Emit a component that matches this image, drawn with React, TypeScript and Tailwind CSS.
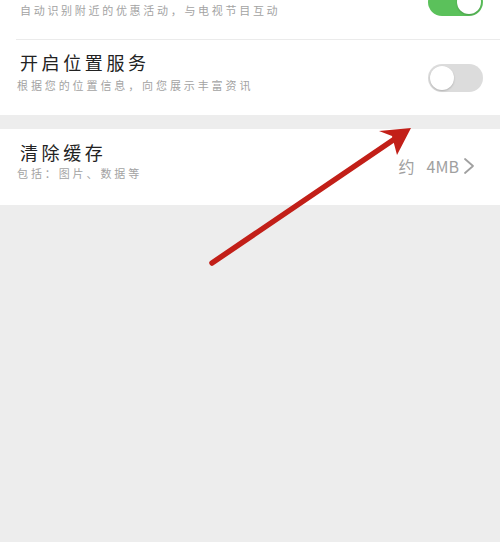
import React from "react"

const font = { fontFamily: '"Noto Sans CJK SC", "Noto Sans", sans-serif' }

function Toggle({ on }: { on: boolean }) {
  return (
    <div
      className={`flex h-[28px] w-[55px] shrink-0 items-center rounded-full p-[2px] ${
        on ? "justify-end bg-[#5bc15b]" : "justify-start bg-[#dcdcdc]"
      }`}
    >
      <div className="h-[24px] w-[24px] rounded-full bg-white shadow-[0_1px_2px_rgba(0,0,0,0.2)]" />
    </div>
  )
}

export default function App() {
  return (
    <div className="relative h-[542px] w-[500px] overflow-hidden bg-[#ededed]" style={font}>
      <div className="bg-white">
        <div className="-mt-[12px] ml-[16px] flex h-[52px] items-start justify-between border-b border-[#ebebeb] pr-[17px]">
          <div className="pt-[14px] pl-[4px] text-[11px] leading-[16px] tracking-[2.7px] text-[#a3a3a3]">
            自动识别附近的优惠活动，与电视节目互动
          </div>
          <Toggle on />
        </div>
        <div className="flex h-[75px] items-start justify-between pr-[17px] pl-[17px]">
          <div className="flex flex-col pt-[10px]">
            <div className="pl-[3px] text-[18px] leading-[24px] tracking-[3.6px] text-[#222]">开启位置服务</div>
            <div className="mt-[3px] text-[11px] leading-[16px] tracking-[2.9px] text-[#a3a3a3]">
              根据您的位置信息，向您展示丰富资讯
            </div>
          </div>
          <div className="pt-[24px]">
            <Toggle on={false} />
          </div>
        </div>
      </div>

      <div className="mt-[14px] flex h-[76px] items-start justify-between bg-white pr-[25px] pl-[17px]">
        <div className="flex flex-col pt-[11px]">
          <div className="pl-[3px] text-[18px] leading-[24px] tracking-[3.6px] text-[#222]">清除缓存</div>
          <div className="mt-[1px] text-[11px] leading-[16px] tracking-[2.9px] text-[#a3a3a3]">包括：图片、数据等</div>
        </div>
        <div className="flex items-center gap-[4px] pt-[25px] text-[16px] leading-[24px] text-[#a0a0a0]">
          <span className="mr-[8px]">约</span>
          <span>4MB</span>
          <svg width="12" height="18" viewBox="0 0 12 18" fill="none">
            <path d="M2 2 L10 9 L2 16" stroke="#a0a0a0" strokeWidth="1.8" strokeLinecap="round" strokeLinejoin="round" />
          </svg>
        </div>
      </div>

      <svg className="pointer-events-none absolute inset-0" width="500" height="542" viewBox="0 0 500 542">
        <line x1="212" y1="263" x2="402" y2="134" stroke="#c21f18" strokeWidth="5.5" strokeLinecap="round" />
        <path d="M411 128 L379 131 L392 136 L397 155 Z" fill="#c21f18" />
      </svg>
    </div>
  )
}
